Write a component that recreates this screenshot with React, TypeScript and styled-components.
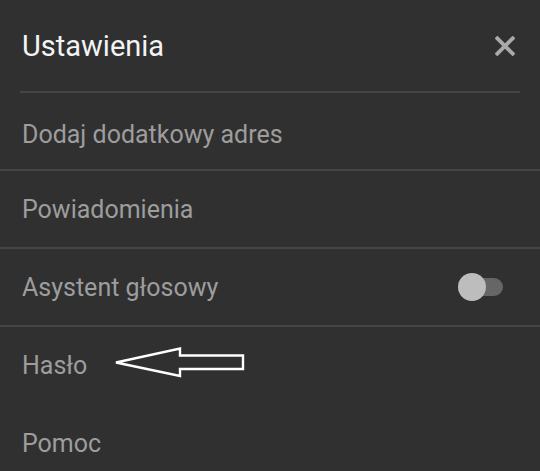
import React from "react";
import styled, { createGlobalStyle } from "styled-components";

const Global = createGlobalStyle`
  html, body { margin: 0; padding: 0; background: #303030; }
  body { font-family: Roboto, "Noto Sans", Arial, sans-serif; }
`;

const Panel = styled.div`
  width: 540px;
  height: 471px;
  overflow: hidden;
  background: #303030;
  display: flex;
  flex-direction: column;
`;

const Header = styled.header`
  height: 91px;
  flex: 0 0 auto;
  display: flex;
  align-items: center;
  justify-content: space-between;
  padding: 0 25px 0 22px;
  box-sizing: border-box;
`;

const Title = styled.h1`
  margin: 0;
  font-size: 29px;
  font-weight: 400;
  color: #f4f4f4;
  letter-spacing: 0;
`;

const CloseButton = styled.button`
  width: 20px;
  height: 20px;
  padding: 0;
  border: 0;
  background: transparent;
  display: flex;
  cursor: pointer;
`;

const HeaderDivider = styled.div`
  height: 2px;
  flex: 0 0 auto;
  margin: 0 20px;
  background: #454545;
`;

const Row = styled.div<{ $last?: boolean; $top?: number }>`
  position: relative;
  height: 78px;
  flex: 0 0 auto;
  box-sizing: border-box;
  display: flex;
  align-items: center;
  justify-content: space-between;
  padding: ${(p) => p.$top ?? 0}px 37px 0 22px;
  border-bottom: 2px solid ${(p) => (p.$last ? "transparent" : "#454545")};
`;

const Label = styled.span`
  font-size: 25px;
  color: #9d9d9d;
`;

const Toggle = styled.div`
  position: relative;
  width: 45px;
  height: 28px;
  flex: 0 0 auto;
`;

const Track = styled.div`
  position: absolute;
  left: 4px;
  right: 0;
  top: 5px;
  height: 18px;
  border-radius: 9px;
  background: #666666;
`;

const Knob = styled.div`
  position: absolute;
  left: 0;
  top: 0;
  width: 28px;
  height: 28px;
  border-radius: 50%;
  background: #bdbdbd;
`;

const ArrowMark = styled.svg`
  position: absolute;
  left: 0;
  top: 0;
  pointer-events: none;
`;

const items = [
  { label: "Dodaj dodatkowy adres", top: 6 },
  { label: "Powiadomienia" },
  { label: "Asystent głosowy", toggle: true },
  { label: "Hasło", arrow: true, noLine: true },
  { label: "Pomoc", noLine: true },
];

export default function App() {
  return (
    <>
      <Global />
      <Panel>
        <Header>
          <Title>Ustawienia</Title>
          <CloseButton aria-label="Zamknij">
            <svg width="20" height="20" viewBox="0 0 20 20">
              <path d="M1 1 L19 19 M19 1 L1 19" stroke="#a9a9a9" strokeWidth="3.8" strokeLinecap="butt" />
            </svg>
          </CloseButton>
        </Header>
        <HeaderDivider />
        {items.map((it) => (
          <Row key={it.label} $last={it.noLine} $top={it.top}>
            <Label>{it.label}</Label>
            {it.toggle && (
              <Toggle>
                <Track />
                <Knob />
              </Toggle>
            )}
            {it.arrow && (
              <ArrowMark width="540" height="78" viewBox="0 0 540 78">
                <polygon
                  points="116,35.5 180,21.5 180,28.5 243,28.5 243,42 180,42 180,49"
                  fill="none"
                  stroke="#ffffff"
                  strokeWidth="2.4"
                  strokeLinejoin="miter"
                />
              </ArrowMark>
            )}
          </Row>
        ))}
      </Panel>
    </>
  );
}
